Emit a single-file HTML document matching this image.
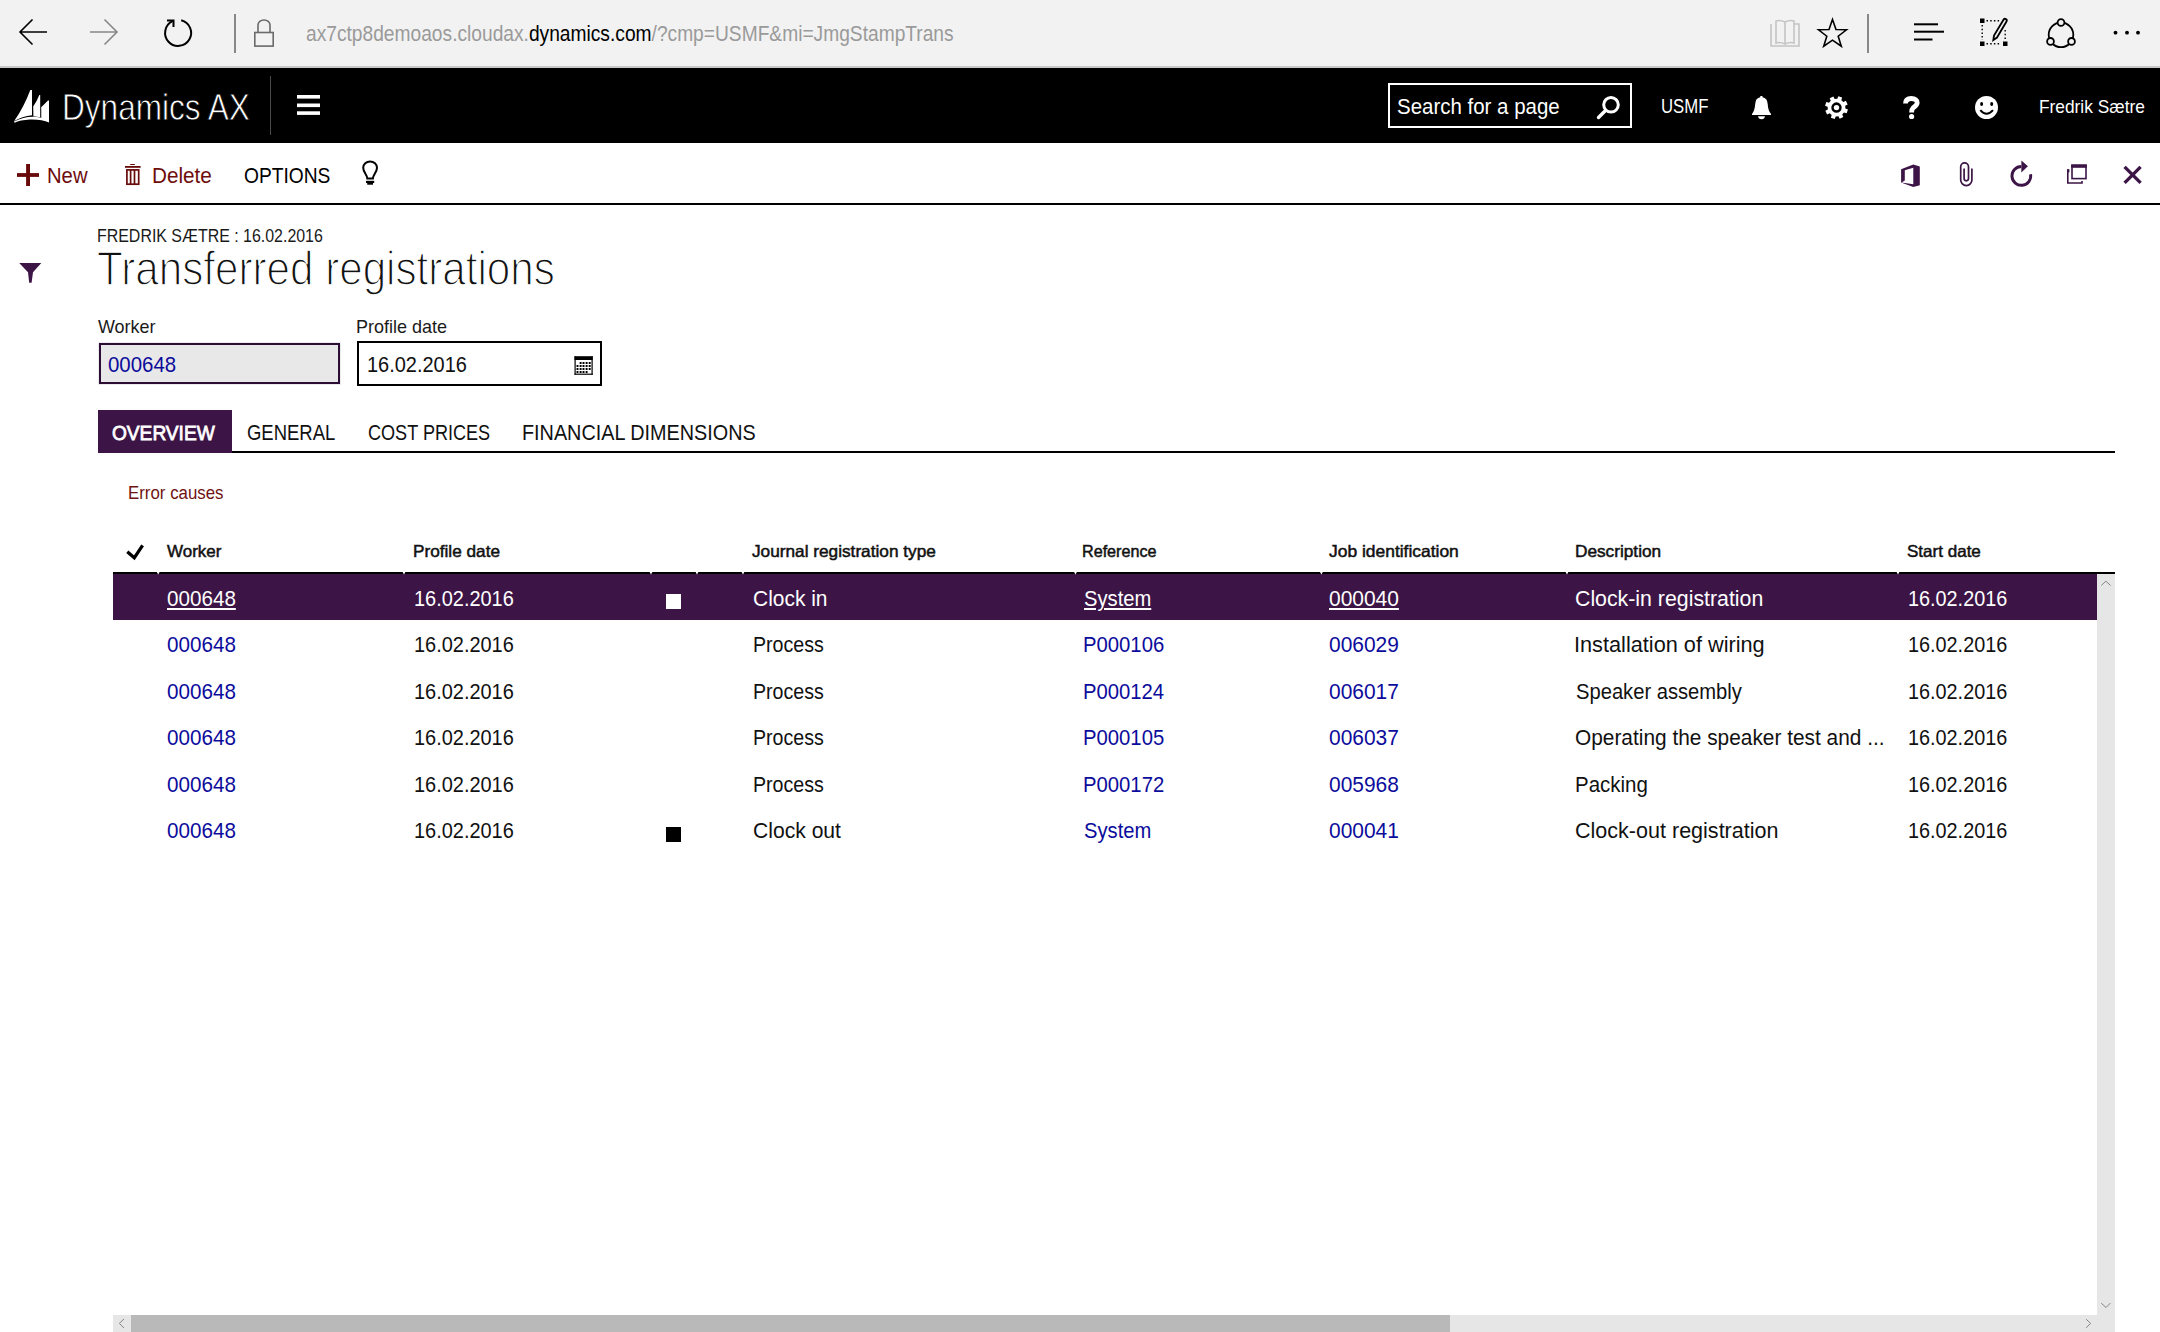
<!DOCTYPE html>
<html><head><meta charset="utf-8"><title>Transferred registrations</title>
<style>
html,body{margin:0;padding:0;width:2160px;height:1332px;overflow:hidden;background:#fff;font-family:"Liberation Sans",sans-serif;}
.b{position:absolute;}
.t{position:absolute;white-space:nowrap;line-height:1;transform-origin:0 0;font-family:"Liberation Sans",sans-serif;}
svg.ov{position:absolute;left:0;top:0;}
</style></head><body>
<div class="b" style="left:0;top:0;width:2160px;height:66px;background:#f2f2f2"></div>
<div class="b" style="left:0;top:66px;width:2160px;height:2px;background:#c9c9c9"></div>
<div class="b" style="left:0;top:68px;width:2160px;height:75px;background:#000"></div>
<div class="b" style="left:270px;top:76px;width:1px;height:59px;background:#4a4a4a"></div>
<div class="b" style="left:1388px;top:83px;width:240px;height:41px;border:2px solid #fff"></div>
<div class="b" style="left:0;top:203px;width:2160px;height:2px;background:#000"></div>
<div class="b" style="left:98px;top:342px;width:243px;height:43px;background:#ebebeb"></div>
<div class="b" style="left:99px;top:343px;width:237px;height:37px;border:2px solid #2c0d36;background:#e8e8e8"></div>
<div class="b" style="left:357px;top:341px;width:241px;height:41px;border:2px solid #000;background:#fff"></div>
<div class="b" style="left:232px;top:451px;width:1883px;height:2px;background:#000"></div>
<div class="b" style="left:98px;top:410px;width:134px;height:43px;background:#3c1546"></div>
<div class="b" style="left:113px;top:572px;width:2002px;height:2px;background:#000"></div>
<div class="b" style="left:113px;top:574px;width:1984px;height:46px;background:#3c1546"></div>
<div class="b" style="left:666px;top:594px;width:15px;height:15px;background:#fff"></div>
<div class="b" style="left:666px;top:827px;width:15px;height:15px;background:#000"></div>
<div class="b" style="left:2097px;top:574px;width:18px;height:758px;background:#e6e6e6"></div>
<div class="b" style="left:113px;top:1315px;width:1984px;height:17px;background:#e6e6e6"></div>
<div class="b" style="left:131px;top:1315px;width:1319px;height:17px;background:#b9b9b9"></div>

<div class="t" style="left:305.64px;top:24px;font-size:21.391px;font-weight:normal;color:#000000;transform:scaleX(0.8976);"><span style="color:#9a9a9a">ax7ctp8demoaos.cloudax.</span>dynamics.com<span style="color:#9a9a9a">/?cmp=USMF&amp;mi=JmgStampTrans</span></div>
<div class="t" style="left:62.42px;top:90px;font-size:36.774px;font-weight:normal;color:#ffffff;transform:scaleX(0.8592);-webkit-text-stroke:0.8px #000000;">Dynamics AX</div>
<div class="t" style="left:1397.18px;top:96px;font-size:22.239px;font-weight:normal;color:#ffffff;transform:scaleX(0.9210);">Search for a page</div>
<div class="t" style="left:1661.14px;top:97px;font-size:19.477px;font-weight:normal;color:#ffffff;transform:scaleX(0.8604);">USMF</div>
<div class="t" style="left:2039.05px;top:98px;font-size:18.314px;font-weight:normal;color:#ffffff;transform:scaleX(0.9464);">Fredrik S&aelig;tre</div>
<div class="t" style="left:47.30px;top:165px;font-size:21.803px;font-weight:normal;color:#6e0c0c;transform:scaleX(0.9290);">New</div>
<div class="t" style="left:151.54px;top:165px;font-size:21.803px;font-weight:normal;color:#6e0c0c;transform:scaleX(0.9503);">Delete</div>
<div class="t" style="left:243.76px;top:165px;font-size:21.803px;font-weight:normal;color:#000000;transform:scaleX(0.8808);">OPTIONS</div>
<div class="t" style="left:97.06px;top:227px;font-size:18.605px;font-weight:normal;color:#1a1a1a;transform:scaleX(0.8570);">FREDRIK S&AElig;TRE : 16.02.2016</div>
<div class="t" style="left:97.16px;top:244px;font-size:48.402px;font-weight:normal;color:#111111;transform:scaleX(0.8716);-webkit-text-stroke:1.5px #ffffff;">Transferred registrations</div>
<div class="t" style="left:98.00px;top:318px;font-size:18.605px;font-weight:normal;color:#1a1a1a;transform:scaleX(0.9650);">Worker</div>
<div class="t" style="left:356.49px;top:318px;font-size:18.605px;font-weight:normal;color:#1a1a1a;transform:scaleX(0.9685);">Profile date</div>
<div class="t" style="left:108.35px;top:354px;font-size:22.093px;font-weight:normal;color:#0c0c9c;transform:scaleX(0.9256);">000648</div>
<div class="t" style="left:367.09px;top:354px;font-size:22.093px;font-weight:normal;color:#111111;transform:scaleX(0.9033);">16.02.2016</div>
<div class="t" style="left:112.46px;top:423px;font-size:20.058px;font-weight:normal;color:#ffffff;transform:scaleX(0.9537);-webkit-text-stroke:0.8px #ffffff;">OVERVIEW</div>
<div class="t" style="left:247.13px;top:422px;font-size:21.221px;font-weight:normal;color:#111111;transform:scaleX(0.8708);">GENERAL</div>
<div class="t" style="left:367.61px;top:422px;font-size:21.221px;font-weight:normal;color:#111111;transform:scaleX(0.8514);">COST PRICES</div>
<div class="t" style="left:522.21px;top:422px;font-size:21.221px;font-weight:normal;color:#111111;transform:scaleX(0.9333);">FINANCIAL DIMENSIONS</div>
<div class="t" style="left:128.21px;top:484px;font-size:18.896px;font-weight:normal;color:#701212;transform:scaleX(0.8928);">Error causes</div>
<div class="t" style="left:167.00px;top:544px;font-size:16.715px;font-weight:normal;color:#111111;transform:scaleX(1.0152);-webkit-text-stroke:0.5px #111111;">Worker</div>
<div class="t" style="left:412.51px;top:544px;font-size:16.715px;font-weight:normal;color:#111111;transform:scaleX(1.0296);-webkit-text-stroke:0.5px #111111;">Profile date</div>
<div class="t" style="left:752.00px;top:544px;font-size:16.715px;font-weight:normal;color:#111111;transform:scaleX(1.0311);-webkit-text-stroke:0.5px #111111;">Journal registration type</div>
<div class="t" style="left:1082.31px;top:544px;font-size:16.715px;font-weight:normal;color:#111111;transform:scaleX(0.9666);-webkit-text-stroke:0.5px #111111;">Reference</div>
<div class="t" style="left:1329.36px;top:544px;font-size:16.715px;font-weight:normal;color:#111111;transform:scaleX(1.0432);-webkit-text-stroke:0.5px #111111;">Job identification</div>
<div class="t" style="left:1574.79px;top:544px;font-size:16.715px;font-weight:normal;color:#111111;transform:scaleX(1.0310);-webkit-text-stroke:0.5px #111111;">Description</div>
<div class="t" style="left:1906.60px;top:544px;font-size:16.715px;font-weight:normal;color:#111111;transform:scaleX(1.0194);-webkit-text-stroke:0.5px #111111;">Start date</div>
<div class="t" style="left:167.22px;top:589px;font-size:21.512px;font-weight:normal;color:#ffffff;transform:scaleX(0.9597);text-decoration:underline;text-decoration-thickness:1.5px;text-underline-offset:2px;">000648</div>
<div class="t" style="left:414.31px;top:589px;font-size:21.512px;font-weight:normal;color:#ffffff;transform:scaleX(0.9274);">16.02.2016</div>
<div class="t" style="left:752.57px;top:589px;font-size:21.512px;font-weight:normal;color:#ffffff;transform:scaleX(0.9743);">Clock in</div>
<div class="t" style="left:1084.06px;top:589px;font-size:21.512px;font-weight:normal;color:#ffffff;transform:scaleX(0.9383);text-decoration:underline;text-decoration-thickness:1.5px;text-underline-offset:2px;">System</div>
<div class="t" style="left:1329.49px;top:589px;font-size:21.512px;font-weight:normal;color:#ffffff;transform:scaleX(0.9740);text-decoration:underline;text-decoration-thickness:1.5px;text-underline-offset:2px;">000040</div>
<div class="t" style="left:1575.47px;top:589px;font-size:21.512px;font-weight:normal;color:#ffffff;transform:scaleX(0.9909);">Clock-in registration</div>
<div class="t" style="left:1908.32px;top:589px;font-size:21.512px;font-weight:normal;color:#ffffff;transform:scaleX(0.9223);">16.02.2016</div>
<div class="t" style="left:167.22px;top:635px;font-size:21.512px;font-weight:normal;color:#0c0c9c;transform:scaleX(0.9597);">000648</div>
<div class="t" style="left:414.31px;top:635px;font-size:21.512px;font-weight:normal;color:#111111;transform:scaleX(0.9274);">16.02.2016</div>
<div class="t" style="left:752.52px;top:635px;font-size:21.512px;font-weight:normal;color:#111111;transform:scaleX(0.9117);">Process</div>
<div class="t" style="left:1083.11px;top:635px;font-size:21.512px;font-weight:normal;color:#0c0c9c;transform:scaleX(0.9431);">P000106</div>
<div class="t" style="left:1329.49px;top:635px;font-size:21.512px;font-weight:normal;color:#0c0c9c;transform:scaleX(0.9740);">006029</div>
<div class="t" style="left:1574.44px;top:635px;font-size:21.512px;font-weight:normal;color:#111111;transform:scaleX(1.0098);">Installation of wiring</div>
<div class="t" style="left:1908.32px;top:635px;font-size:21.512px;font-weight:normal;color:#111111;transform:scaleX(0.9223);">16.02.2016</div>
<div class="t" style="left:167.22px;top:682px;font-size:21.512px;font-weight:normal;color:#0c0c9c;transform:scaleX(0.9597);">000648</div>
<div class="t" style="left:414.31px;top:682px;font-size:21.512px;font-weight:normal;color:#111111;transform:scaleX(0.9274);">16.02.2016</div>
<div class="t" style="left:752.52px;top:682px;font-size:21.512px;font-weight:normal;color:#111111;transform:scaleX(0.9117);">Process</div>
<div class="t" style="left:1083.12px;top:682px;font-size:21.512px;font-weight:normal;color:#0c0c9c;transform:scaleX(0.9414);">P000124</div>
<div class="t" style="left:1329.49px;top:682px;font-size:21.512px;font-weight:normal;color:#0c0c9c;transform:scaleX(0.9740);">006017</div>
<div class="t" style="left:1575.52px;top:682px;font-size:21.512px;font-weight:normal;color:#111111;transform:scaleX(0.9380);">Speaker assembly</div>
<div class="t" style="left:1908.32px;top:682px;font-size:21.512px;font-weight:normal;color:#111111;transform:scaleX(0.9223);">16.02.2016</div>
<div class="t" style="left:167.22px;top:728px;font-size:21.512px;font-weight:normal;color:#0c0c9c;transform:scaleX(0.9597);">000648</div>
<div class="t" style="left:414.31px;top:728px;font-size:21.512px;font-weight:normal;color:#111111;transform:scaleX(0.9274);">16.02.2016</div>
<div class="t" style="left:752.52px;top:728px;font-size:21.512px;font-weight:normal;color:#111111;transform:scaleX(0.9117);">Process</div>
<div class="t" style="left:1083.11px;top:728px;font-size:21.512px;font-weight:normal;color:#0c0c9c;transform:scaleX(0.9431);">P000105</div>
<div class="t" style="left:1329.49px;top:728px;font-size:21.512px;font-weight:normal;color:#0c0c9c;transform:scaleX(0.9740);">006037</div>
<div class="t" style="left:1575.49px;top:728px;font-size:21.512px;font-weight:normal;color:#111111;transform:scaleX(0.9701);">Operating the speaker test and ...</div>
<div class="t" style="left:1908.32px;top:728px;font-size:21.512px;font-weight:normal;color:#111111;transform:scaleX(0.9223);">16.02.2016</div>
<div class="t" style="left:167.22px;top:775px;font-size:21.512px;font-weight:normal;color:#0c0c9c;transform:scaleX(0.9597);">000648</div>
<div class="t" style="left:414.31px;top:775px;font-size:21.512px;font-weight:normal;color:#111111;transform:scaleX(0.9274);">16.02.2016</div>
<div class="t" style="left:752.52px;top:775px;font-size:21.512px;font-weight:normal;color:#111111;transform:scaleX(0.9117);">Process</div>
<div class="t" style="left:1083.11px;top:775px;font-size:21.512px;font-weight:normal;color:#0c0c9c;transform:scaleX(0.9431);">P000172</div>
<div class="t" style="left:1329.49px;top:775px;font-size:21.512px;font-weight:normal;color:#0c0c9c;transform:scaleX(0.9740);">005968</div>
<div class="t" style="left:1575.36px;top:775px;font-size:21.512px;font-weight:normal;color:#111111;transform:scaleX(0.9518);">Packing</div>
<div class="t" style="left:1908.32px;top:775px;font-size:21.512px;font-weight:normal;color:#111111;transform:scaleX(0.9223);">16.02.2016</div>
<div class="t" style="left:167.22px;top:821px;font-size:21.512px;font-weight:normal;color:#0c0c9c;transform:scaleX(0.9597);">000648</div>
<div class="t" style="left:414.31px;top:821px;font-size:21.512px;font-weight:normal;color:#111111;transform:scaleX(0.9274);">16.02.2016</div>
<div class="t" style="left:752.56px;top:821px;font-size:21.512px;font-weight:normal;color:#111111;transform:scaleX(0.9816);">Clock out</div>
<div class="t" style="left:1084.06px;top:821px;font-size:21.512px;font-weight:normal;color:#0c0c9c;transform:scaleX(0.9383);">System</div>
<div class="t" style="left:1329.49px;top:821px;font-size:21.512px;font-weight:normal;color:#0c0c9c;transform:scaleX(0.9740);">000041</div>
<div class="t" style="left:1575.46px;top:821px;font-size:21.512px;font-weight:normal;color:#111111;transform:scaleX(1.0018);">Clock-out registration</div>
<div class="t" style="left:1908.32px;top:821px;font-size:21.512px;font-weight:normal;color:#111111;transform:scaleX(0.9223);">16.02.2016</div>
<svg class="ov" width="2160" height="1332" viewBox="0 0 2160 1332">
<!-- browser bar -->
<g fill="none" stroke="#000" stroke-width="1.6">
  <path d="M47,32 L20,32 M32.5,19.5 L20,32 L32.5,44.5"/>
</g>
<g fill="none" stroke="#888" stroke-width="1.6">
  <path d="M90,32 L117,32 M104.5,19.5 L117,32 L104.5,44.5"/>
</g>
<g fill="none" stroke="#000" stroke-width="2">
  <path d="M181.2,20.3 A13,13 0 1 1 172.5,21.2"/>
  <path d="M167,20.5 L173.5,20.5 L173.5,27"/>
</g>
<rect x="234" y="14" width="2" height="39" fill="#888"/>
<g fill="none" stroke="#6a6a6a" stroke-width="1.6">
  <rect x="254.8" y="32.5" width="18.4" height="13.6"/>
  <path d="M258,32.5 L258,25 A6,5 0 0 1 270,25 L270,32.5"/>
</g>
<g fill="none" stroke="#c4c4c4" stroke-width="1.6">
  <path d="M1771,24 L1771,46 L1799,46 L1799,24 L1794,24 M1785,44 L1785,22 Q1780,19.5 1776,21 L1776,43 Q1780,41.5 1785,44 Q1790,41.5 1794,43 L1794,21 Q1790,19.5 1785,22"/>
</g>
<path fill="none" stroke="#000" stroke-width="1.6" stroke-linejoin="miter" d="M1832.5,19.5 L1836,29.5 L1846.5,29.8 L1838.2,36.2 L1841.3,46.2 L1832.5,40.2 L1823.7,46.2 L1826.8,36.2 L1818.5,29.8 L1829,29.5 Z"/>
<rect x="1867" y="14" width="2" height="39" fill="#888"/>
<g fill="#000">
  <rect x="1914" y="23.3" width="24" height="2"/>
  <rect x="1914" y="30.7" width="30" height="2"/>
  <rect x="1914" y="38.5" width="18.5" height="2"/>
</g>
<g fill="#000">
  <rect x="1980" y="18.5" width="4.5" height="4.5"/>
  <rect x="1980" y="41.5" width="4.5" height="4.5"/>
  <rect x="2003" y="41.5" width="4.5" height="4.5"/>
</g>
<g fill="none" stroke="#000" stroke-width="1.4" stroke-dasharray="1.5,2.2">
  <path d="M1986.5,20.7 L2000,20.7"/>
  <path d="M1982.2,25 L1982.2,40"/>
  <path d="M1986.5,43.7 L2001,43.7"/>
  <path d="M2005.2,30 L2005.2,40"/>
</g>
<path fill="none" stroke="#000" stroke-width="1.8" d="M1997,37.5 L2006.5,21.5 A1.6,1.6 0 0 0 2003.5,19.7 L1994,35.5 L1993.3,40 Z"/>
<circle cx="2061" cy="34.8" r="12.3" fill="none" stroke="#000" stroke-width="1.8"/>
<g fill="#f2f2f2" stroke="#000" stroke-width="1.8">
  <circle cx="2061" cy="22.5" r="3.4"/>
  <circle cx="2050.5" cy="41.4" r="3.4"/>
  <circle cx="2071.5" cy="41.4" r="3.4"/>
</g>
<g fill="#000">
  <circle cx="2115.5" cy="32.7" r="1.9"/>
  <circle cx="2127" cy="32.7" r="1.9"/>
  <circle cx="2138" cy="32.7" r="1.9"/>
</g>
<!-- nav -->
<g fill="#fff">
  <path d="M14.2,121 Q24,107 30.3,90 L32,90 L32,115.2 Q22,116.2 14.2,121 Z"/>
  <path d="M33.2,106.5 Q37,101 39.3,95 L40.2,95 L40.2,117.3 L33.4,116.2 Z"/>
  <path d="M41.2,107.3 Q45,103.5 48,100.5 L49,100.5 L49,122 L41.3,118.2 Z"/>
  <path d="M14,121.5 Q24,116.5 34,116.8 Q44,117.6 49,120 L49,122.5 Q42,119.2 30,119.5 Q20,120 14.5,122.8 Z"/>
  <rect x="297" y="95" width="23" height="3.6"/>
  <rect x="297" y="103.5" width="23" height="3.6"/>
  <rect x="297" y="111.3" width="23" height="3.6"/>
</g>
<g fill="none" stroke="#fff" stroke-width="3">
  <circle cx="1611" cy="104.8" r="7.3"/>
</g>
<path d="M1605.5,110.5 L1598.5,117.5" stroke="#fff" stroke-width="3.4" stroke-linecap="round"/>
<g fill="#fff">
  <path d="M1752,115 L1771,115 L1771,114 Q1768,110.5 1767.7,104 Q1767.3,98 1762.5,97.3 L1762.5,96 L1760.3,96 L1760.3,97.3 Q1755.5,98 1755.2,104 Q1754.8,110.5 1752,114 Z"/>
  <path d="M1758,116.2 L1765,116.2 Q1764.6,119.2 1761.5,119.2 Q1758.4,119.2 1758,116.2 Z"/>
</g>
<circle cx="1836.5" cy="107.6" r="2.7" fill="#fff"/><path id="gear" fill="#fff" fill-rule="evenodd" d="M1843.32,101.88 L1845.88,100.78 L1847.65,104.40 L1845.21,105.75 L1845.37,108.38 L1847.96,109.41 L1846.65,113.22 L1843.96,112.45 L1842.22,114.42 L1843.32,116.98 L1839.70,118.75 L1838.35,116.31 L1835.72,116.47 L1834.69,119.06 L1830.88,117.75 L1831.65,115.06 L1829.68,113.32 L1827.12,114.42 L1825.35,110.80 L1827.79,109.45 L1827.63,106.82 L1825.04,105.79 L1826.35,101.98 L1829.04,102.75 L1830.78,100.78 L1829.68,98.22 L1833.30,96.45 L1834.65,98.89 L1837.28,98.73 L1838.31,96.14 L1842.12,97.45 L1841.35,100.14 Z M1841.70,107.6 A5.2,5.2 0 1 0 1831.30,107.6 A5.2,5.2 0 1 0 1841.70,107.6 Z"/>
<path fill="none" stroke="#fff" stroke-width="4.8" d="M1905.5,103.6 C1905.5,99.8 1907.8,98.5 1911.4,98.5 C1915,98.5 1917.2,100.2 1917.2,102.8 C1917.2,105.4 1914.8,106.3 1913.2,107.8 C1912,108.9 1911.6,110 1911.6,112.6"/>
<circle cx="1911.6" cy="116.5" r="2.6" fill="#fff"/>
<circle cx="1986.5" cy="107.5" r="11.5" fill="#fff"/>
<ellipse cx="1981.6" cy="104" rx="1.5" ry="2.1" fill="#000"/>
<ellipse cx="1991.7" cy="104" rx="1.5" ry="2.1" fill="#000"/>
<path d="M1980.3,110.2 Q1986.5,117.5 1993,110.2" fill="none" stroke="#000" stroke-width="2"/>
<!-- action bar -->
<g fill="#680a0a">
  <rect x="17" y="173.1" width="22" height="3.8"/>
  <rect x="26.1" y="164" width="3.9" height="22"/>
  <rect x="125" y="166" width="15.6" height="1.8"/>
  <rect x="130.2" y="164" width="4.6" height="1"/>
</g>
<g fill="none" stroke="#680a0a" stroke-width="1.7">
  <rect x="126.9" y="169.9" width="11.8" height="14.3"/>
  <path d="M130.6,170 L130.6,184 M134.5,170 L134.5,184"/>
</g>
<g fill="none" stroke="#000" stroke-width="2">
  <path d="M367.3,178.5 C367,174.5 363.2,172.2 363.2,167.8 A6.9,6.4 0 0 1 377,167.8 C377,172.2 373.2,174.5 372.9,178.5 Z"/>
</g>
<g fill="#000">
  <rect x="366" y="180.8" width="8.2" height="2.2"/>
  <rect x="367.2" y="182.5" width="5.8" height="2.2"/>
</g>
<g fill="#3c1546">
  <path fill-rule="evenodd" d="M1913.3,164.6 L1919.8,166.4 L1919.8,185.3 L1913.3,186.9 L1901.1,182.5 L1901.1,169.2 Z M1904.8,170.2 L1913.3,167.8 L1913.3,184.3 L1901.6,182.6 L1904.8,180.6 Z"/>
</g>
<path fill="none" stroke="#3c1546" stroke-width="1.7" d="M1971.9,168.5 L1971.9,180 A5.6,5.6 0 0 1 1960.7,180 L1960.7,166.8 A3.9,3.9 0 0 1 1968.5,166.8 L1968.5,178.6 A2.2,2.2 0 0 1 1964.1,178.6 L1964.1,168.4"/>
<path fill="none" stroke="#3c1546" stroke-width="2.9" d="M2030.6,174.3 A9.4,9.4 0 1 1 2021.3,166.5"/>
<path fill="#3c1546" d="M2021.4,160.5 L2027.9,166.2 L2021.3,172.5 Z"/>
<g fill="none" stroke="#3c1546" stroke-width="1.6">
  <rect x="2072" y="165.4" width="14" height="13.2"/>
  <path d="M2067.8,169.5 L2067.8,183 L2082,183 L2082,181"/>
</g>
<g fill="#3c1546">
  <rect x="2071.2" y="164.4" width="15.6" height="3.4"/>
  <rect x="2067" y="169.2" width="2.4" height="3.2"/>
</g>
<path d="M2124.6,166.9 L2140.6,182.9 M2140.6,166.9 L2124.6,182.9" stroke="#3c1546" stroke-width="3.3"/>
<!-- filter -->
<path fill="#3c1546" d="M19.2,263 L41.3,263 L33,272.3 L31.6,282.7 L29.2,282.7 L28,272.3 Z"/>
<!-- calendar -->
<g fill="#000">
  <rect x="574.5" y="356.2" width="18.2" height="3.8"/>
  <rect x="574.5" y="356.2" width="1.2" height="18.6"/>
  <rect x="591.5" y="356.2" width="1.2" height="18.6"/>
  <rect x="574.5" y="373.6" width="18.2" height="1.2"/>
  <rect x="579.6" y="362.0" width="2" height="2" rx="0.5"/><rect x="582.5" y="362.0" width="2" height="2" rx="0.5"/><rect x="585.6" y="362.0" width="2" height="2" rx="0.5"/><rect x="588.7" y="362.0" width="2" height="2" rx="0.5"/><rect x="576.5" y="365.0" width="2" height="2" rx="0.5"/><rect x="579.6" y="365.0" width="2" height="2" rx="0.5"/><rect x="582.5" y="365.0" width="2" height="2" rx="0.5"/><rect x="585.6" y="365.0" width="2" height="2" rx="0.5"/><rect x="588.7" y="365.0" width="2" height="2" rx="0.5"/><rect x="576.5" y="368.0" width="2" height="2" rx="0.5"/><rect x="579.6" y="368.0" width="2" height="2" rx="0.5"/><rect x="582.5" y="368.0" width="2" height="2" rx="0.5"/><rect x="585.6" y="368.0" width="2" height="2" rx="0.5"/><rect x="588.7" y="368.0" width="2" height="2" rx="0.5"/><rect x="576.5" y="371.0" width="2" height="2" rx="0.5"/><rect x="579.6" y="371.0" width="2" height="2" rx="0.5"/><rect x="582.5" y="371.0" width="2" height="2" rx="0.5"/><rect x="585.6" y="371.0" width="2" height="2" rx="0.5"/>
</g>
<!-- checkmark -->
<path d="M127.3,551.8 L134.3,557.8 L142.6,545.4" fill="none" stroke="#000" stroke-width="3.3"/>
<!-- header notches -->
<g fill="#fff"><path d="M156.8,572 L159.6,572 L158.2,574.6 Z"/><path d="M402.6,572 L405.4,572 L404.0,574.6 Z"/><path d="M649.6,572 L652.4,572 L651.0,574.6 Z"/><path d="M695.6,572 L698.4,572 L697.0,574.6 Z"/><path d="M741.6,572 L744.4,572 L743.0,574.6 Z"/><path d="M1074.1,572 L1076.9,572 L1075.5,574.6 Z"/><path d="M1320.0,572 L1322.8,572 L1321.4,574.6 Z"/><path d="M1565.6,572 L1568.4,572 L1567.0,574.6 Z"/><path d="M1896.6,572 L1899.4,572 L1898.0,574.6 Z"/></g>
<!-- scroll chevrons -->
<g fill="none" stroke="#858585" stroke-width="1">
  <path d="M2101.2,585.5 L2105.9,581.2 L2110.6,585.5"/>
  <path d="M2101.2,1303.1 L2106,1307.5 L2110.4,1303.1"/>
  <path d="M2086.1,1319.2 L2090.6,1323.4 L2086.1,1327.8"/>
  <path d="M124,1319 L119.3,1323.4 L124,1328"/>
</g>

</svg>
</body></html>
